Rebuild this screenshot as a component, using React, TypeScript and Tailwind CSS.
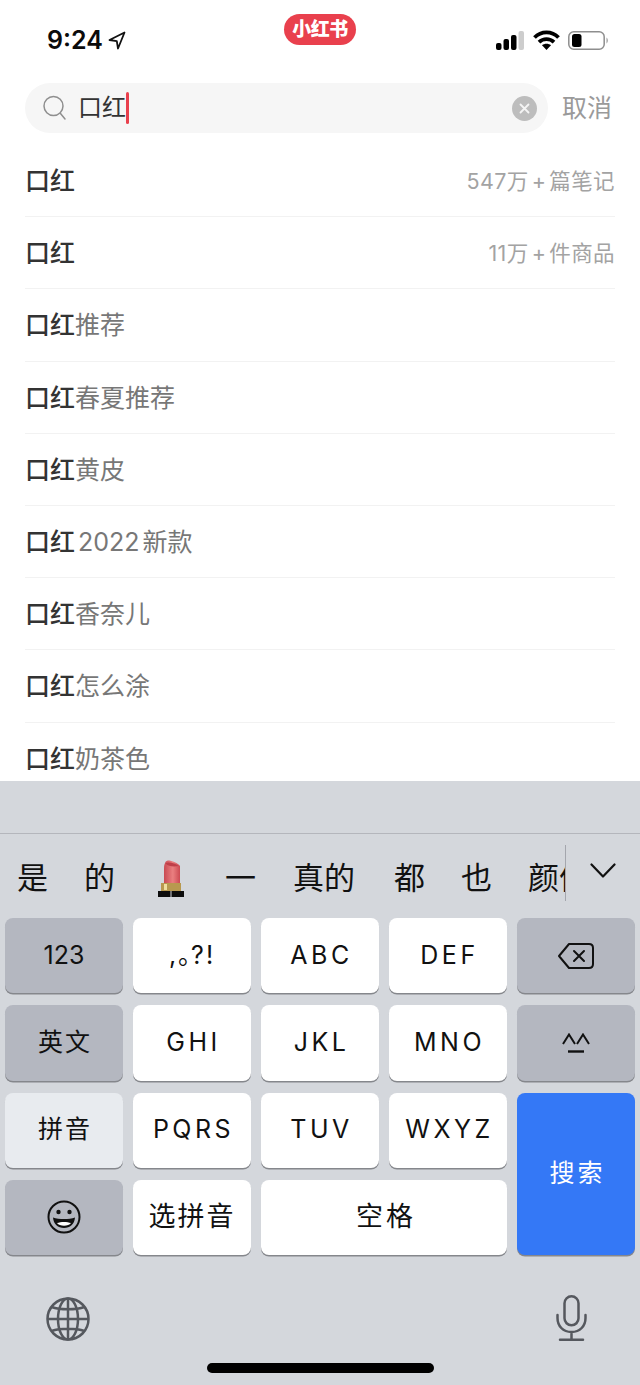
import React from 'react';

const FONT = "font-['Inter','Noto_Sans_CJK_SC',sans-serif]";

const rows: { bold: string; rest?: string; count?: [string, string] }[] = [
  { bold: '口红', count: ['547万', '篇笔记'] },
  { bold: '口红', count: ['11万', '件商品'] },
  { bold: '口红', rest: '推荐' },
  { bold: '口红', rest: '春夏推荐' },
  { bold: '口红', rest: '黄皮' },
  { bold: '口红', rest: ' 2022 新款' },
  { bold: '口红', rest: '香奈儿' },
  { bold: '口红', rest: '怎么涂' },
  { bold: '口红', rest: '奶茶色' },
];

const StatusBar = () => (
  <div className="relative flex h-[83px] items-start justify-between pl-[47px] pr-[32px] pt-[25px]">
    <div className="flex items-center gap-[5px]">
      <span className="text-[25px] leading-[30px] font-semibold text-[#0b0b0b]">9:24</span>
      <svg width="18" height="19" viewBox="0 0 18 19" fill="none" stroke="#111" strokeWidth="1.8" strokeLinejoin="round">
        <path d="M16.5 1.500 1.500 9 8.800 10.200 10 17.500Z" />
      </svg>
    </div>
    {/* app badge over the status bar */}
    <div className="absolute left-[284px] top-[14px] flex h-[31px] w-[72px] items-center justify-center rounded-full bg-[#e9404d]">
      <span className="text-[19px] leading-none font-black tracking-[-0.5px] text-white">小红书</span>
    </div>
    <div className="flex items-center gap-[8px] pt-[5px]">
      <svg className="mr-[1px]" width="28" height="19" viewBox="0 0 28 19">
        <rect x="0" y="12" width="5.500" height="7" rx="2" fill="#000" />
        <rect x="7.500" y="8" width="5.500" height="11" rx="2" fill="#000" />
        <rect x="15" y="4" width="5.500" height="15" rx="2" fill="#000" />
        <rect x="22.500" y="0" width="5.500" height="19" rx="2" fill="#cdcdcd" />
      </svg>
      <svg width="27" height="20" viewBox="0 0 27 20" fill="none" stroke="#000" strokeWidth="3.800">
        <path d="M1.500 7.500C8.200 0.700 18.800 0.700 25.500 7.500" />
        <path d="M6 12.200C10.200 8.200 16.800 8.200 21 12.200" />
        <path d="M13.500 20 9 15.200C11.400 13.200 15.600 13.200 18 15.200Z" fill="#000" stroke="none" />
      </svg>
      <svg width="40" height="19" viewBox="0 0 40 19" fill="none">
        <rect x="0.800" y="0.800" width="35.400" height="17.400" rx="5" stroke="#8e8e8e" strokeWidth="1.500" />
        <rect x="4" y="3" width="9.500" height="13" rx="2.500" fill="#000" />
        <path d="M38.500 6.500v6c.8-.5 1.300-1.700 1.300-3s-.5-2.500-1.300-3Z" fill="#9a9a9a" />
      </svg>
    </div>
  </div>
);

const SearchBar = () => (
  <div className="flex items-center pl-[25px] pr-[28px]">
    <div className="flex h-[50px] w-[523px] items-center rounded-full bg-[#f6f6f6] pl-[18px] pr-[11px]">
      <svg width="24" height="26" viewBox="0 0 24 26" fill="none" stroke="#8f8f8f" strokeWidth="1.5" strokeLinecap="round">
        <circle cx="10.500" cy="11" r="9.500" />
        <path d="M17.500 18.500 22 24" />
      </svg>
      <span className="ml-[11px] text-[24px] leading-[30px] text-[#333]">口红</span>
      <span className="h-[32px] w-[3px] rounded-full bg-[#e9404d]" />
      <div className="ml-auto flex h-[25px] w-[25px] items-center justify-center rounded-full bg-[#bdbdbd]">
        <svg width="11" height="11" viewBox="0 0 11 11" stroke="#f5f5f5" strokeWidth="1.800" strokeLinecap="round">
          <path d="M1.500 1.500l8 8M9.500 1.500l-8 8" />
        </svg>
      </div>
    </div>
    <span className="ml-[14px] text-[25px] leading-[30px] whitespace-nowrap text-[#9a9a9a]">取消</span>
  </div>
);

const Suggestions = () => (
  <div className="mt-[12px] flex-1 overflow-hidden px-[25px]">
    {rows.map((r, i) => (
      <div key={i} className="flex h-[72.2px] items-center justify-between border-b border-[#f2f2f2] pt-[1px]">
        <span className="text-[25px] leading-[30px] whitespace-pre text-[#777] [word-spacing:-4px]">
          <span className="font-medium text-[#333]">{r.bold}</span>
          {r.rest}
        </span>
        {r.count && (
          <span className="text-[21.5px] leading-[28px] tracking-[0.4px] text-[#a3a3a3]">
            {r.count[0]}
            <span className="mx-[3px]">+</span>
            {r.count[1]}
          </span>
        )}
      </div>
    ))}
  </div>
);

const Lipstick = () => (
  <svg width="26" height="37" viewBox="0 0 26 37">
    <defs>
      <linearGradient id="lipstickBody" x1="0" x2="1" y1="0" y2="0">
        <stop offset="0" stopColor="#c94a52" />
        <stop offset="0.55" stopColor="#ea7f80" />
        <stop offset="1" stopColor="#cc4a52" />
      </linearGradient>
    </defs>
    <path d="M6 24V9C6 4 7.500 0.500 10 0.500 14 0.500 20 3 22 6V24Z" fill="url(#lipstickBody)" />
    <path d="M7.500 3.500C10 1.500 17 3 20.500 6 16 7 10 6.500 7.500 3.500Z" fill="#bf3f49" />
    <rect x="3" y="23" width="20" height="8" fill="#b8994f" />
    <rect x="6" y="24" width="3" height="6" fill="#efdf9f" />
    <rect x="0" y="31" width="12.500" height="6" fill="#0d0d0d" />
    <rect x="13.500" y="31" width="12.500" height="6" fill="#0d0d0d" />
  </svg>
);

const Candidates = () => (
  <div className="relative flex h-[85px] items-start overflow-hidden border-t border-[#b4b6bc]">
    <div className="flex h-[85px] w-[565px] items-center overflow-hidden pl-[17px] pt-[3px] text-[31px] leading-[40px] text-[#111] whitespace-nowrap">
      <span>是</span>
      <span className="ml-[36px]">的</span>
      <span className="ml-[43px] flex"><Lipstick /></span>
      <span className="ml-[41px]">一</span>
      <span className="ml-[37px]">真的</span>
      <span className="ml-[39px]">都</span>
      <span className="ml-[36px]">也</span>
      <span className="ml-[36px]">颜值</span>
    </div>
    <div className="mt-[11px] h-[56px] w-px bg-[#a4a6ad]" />
    <svg className="ml-[24px] mt-[29px]" width="26" height="15" viewBox="0 0 26 15" fill="none" stroke="#111" strokeWidth="2.200" strokeLinecap="round" strokeLinejoin="round">
      <path d="M1.500 1.500 13 13.500 24.500 1.500" />
    </svg>
  </div>
);

const keyBase = 'flex items-center justify-center rounded-[8px] shadow-[0_1.500px_0_#85878c] text-[#111]';
const white = `${keyBase} bg-white`;
const gray = `${keyBase} bg-[#b4b7c0]`;
const latin = 'text-[25px] tracking-[3.500px] pl-[3px]';

const Keyboard = () => (
  <div className="grid h-[337px] grid-cols-5 grid-rows-4 gap-x-[10px] gap-y-[12px] px-[5px]">
    <div className={`${gray} text-[25px]`}>123</div>
    <div className={`${white} text-[25px] tracking-[2px]`}>
      ,<span className="tracking-[-12px]">。</span>?!
    </div>
    <div className={`${white} ${latin}`}>ABC</div>
    <div className={`${white} ${latin}`}>DEF</div>
    <div className={gray}>
      <svg width="38" height="28" viewBox="0 0 38 28" fill="none" stroke="#111" strokeWidth="2" strokeLinejoin="round" strokeLinecap="round">
        <path d="M12 2H32C34.500 2 36 3.500 36 6V22C36 24.500 34.500 26 32 26H12L2 14Z" />
        <path d="M17 9 27 19M27 9 17 19" />
      </svg>
    </div>

    <div className={`${gray} pl-[2px] text-[25px] tracking-[2px]`}>英文</div>
    <div className={`${white} ${latin}`}>GHI</div>
    <div className={`${white} ${latin}`}>JKL</div>
    <div className={`${white} ${latin}`}>MNO</div>
    <div className={gray}>
      <svg width="28" height="20" viewBox="0 0 28 20" fill="none" stroke="#111" strokeLinejoin="miter">
        <path strokeWidth="2" d="M1 11 7 1.500 13 11M15 11 21 1.500 27 11" />
        <path strokeWidth="2.400" d="M6 18.500H22" />
      </svg>
    </div>

    <div className={`${keyBase} bg-[#e8ebef] pl-[2px] text-[25px] tracking-[2px]`}>拼音</div>
    <div className={`${white} ${latin}`}>PQRS</div>
    <div className={`${white} ${latin}`}>TUV</div>
    <div className={`${white} ${latin}`}>WXYZ</div>
    <div className={`${keyBase} row-span-2 bg-[#3478f6] pl-[3px] text-[25px] tracking-[3px] text-white`}>搜索</div>

    <div className={gray}>
      <svg width="34" height="34" viewBox="0 0 34 34" fill="none" stroke="#111" strokeWidth="2">
        <circle cx="17" cy="17" r="15.500" />
        <circle cx="11.500" cy="12" r="2.200" fill="#111" stroke="none" />
        <circle cx="22.500" cy="12" r="2.200" fill="#111" stroke="none" />
        <path d="M6 17.500C12 19.500 22 19.500 28 17.500 27.500 24 23 28 17 28S6.500 24 6 17.500Z" fill="#111" stroke="none" />
        <path d="M10 23C14 21.500 20 21.500 24 23 21.500 26.500 12.500 26.500 10 23Z" fill="#fff" stroke="none" />
      </svg>
    </div>
    <div className={`${white} text-[27px] tracking-[2px]`}>选拼音</div>
    <div className={`${white} col-span-2 pl-[4px] text-[27px] tracking-[3px]`}>空格</div>
  </div>
);

const BottomIcons = () => (
  <div className="relative flex flex-1 items-start justify-between pl-[46px] pr-[53px] pt-[42px]">
    <svg width="44" height="44" viewBox="0 0 44 44" fill="none" stroke="#55585e" strokeWidth="2.500">
      <circle cx="22" cy="22" r="20.500" />
      <ellipse cx="22" cy="22" rx="10" ry="20.500" />
      <path d="M22 1.500V42.500M1.500 22H42.500M5.500 10C14 13 30 13 38.500 10M5.500 34C14 31 30 31 38.500 34" />
    </svg>
    <svg className="-mt-[2px]" width="31" height="46" viewBox="0 0 31 46" fill="none" stroke="#55585e" strokeWidth="2.500" strokeLinecap="round">
      <rect x="8.500" y="1.300" width="14" height="29" rx="7" />
      <path d="M1.500 20V23C1.500 31 7 37 15.500 37S29.500 31 29.500 23V20M15.500 37V44.500M4 44.700H27" />
    </svg>
    {/* home indicator */}
    <div className="absolute bottom-[12px] left-[207px] h-[10px] w-[227px] rounded-full bg-black" />
  </div>
);

export default function App() {
  return (
    <div className={`${FONT} flex h-[1385px] w-[640px] flex-col overflow-hidden bg-white`}>
      <StatusBar />
      <SearchBar />
      <Suggestions />
      <div className="flex h-[604px] flex-col bg-[#d4d7dc]">
        <div className="h-[52px]" />
        <Candidates />
        <Keyboard />
        <BottomIcons />
      </div>
    </div>
  );
}
